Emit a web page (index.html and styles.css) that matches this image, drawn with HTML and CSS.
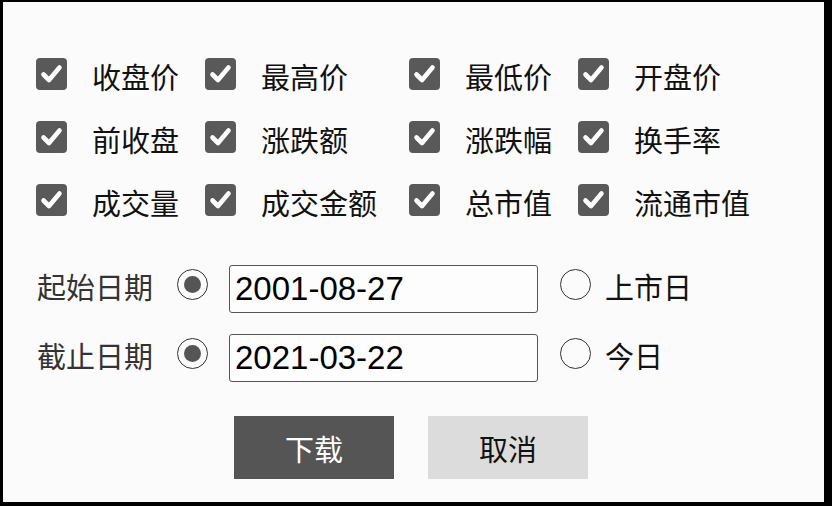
FILE: index.html
```html
<!DOCTYPE html>
<html lang="zh">
<head>
<meta charset="utf-8">
<link rel="stylesheet" href="styles.css">
</head>
<body>
<div class="frame">
  <div class="fields">
    <label class="item"><span class="cb"><svg viewBox="0 0 31 32"><path d="M7.5 16.5 L13 22 L23.5 9.5"/></svg></span><span class="txt">收盘价</span></label>
    <label class="item"><span class="cb"><svg viewBox="0 0 31 32"><path d="M7.5 16.5 L13 22 L23.5 9.5"/></svg></span><span class="txt">最高价</span></label>
    <label class="item"><span class="cb"><svg viewBox="0 0 31 32"><path d="M7.5 16.5 L13 22 L23.5 9.5"/></svg></span><span class="txt">最低价</span></label>
    <label class="item"><span class="cb"><svg viewBox="0 0 31 32"><path d="M7.5 16.5 L13 22 L23.5 9.5"/></svg></span><span class="txt">开盘价</span></label>
    <label class="item"><span class="cb"><svg viewBox="0 0 31 32"><path d="M7.5 16.5 L13 22 L23.5 9.5"/></svg></span><span class="txt">前收盘</span></label>
    <label class="item"><span class="cb"><svg viewBox="0 0 31 32"><path d="M7.5 16.5 L13 22 L23.5 9.5"/></svg></span><span class="txt">涨跌额</span></label>
    <label class="item"><span class="cb"><svg viewBox="0 0 31 32"><path d="M7.5 16.5 L13 22 L23.5 9.5"/></svg></span><span class="txt">涨跌幅</span></label>
    <label class="item"><span class="cb"><svg viewBox="0 0 31 32"><path d="M7.5 16.5 L13 22 L23.5 9.5"/></svg></span><span class="txt">换手率</span></label>
    <label class="item"><span class="cb"><svg viewBox="0 0 31 32"><path d="M7.5 16.5 L13 22 L23.5 9.5"/></svg></span><span class="txt">成交量</span></label>
    <label class="item"><span class="cb"><svg viewBox="0 0 31 32"><path d="M7.5 16.5 L13 22 L23.5 9.5"/></svg></span><span class="txt">成交金额</span></label>
    <label class="item"><span class="cb"><svg viewBox="0 0 31 32"><path d="M7.5 16.5 L13 22 L23.5 9.5"/></svg></span><span class="txt">总市值</span></label>
    <label class="item"><span class="cb"><svg viewBox="0 0 31 32"><path d="M7.5 16.5 L13 22 L23.5 9.5"/></svg></span><span class="txt">流通市值</span></label>
  </div>

  <div class="dates">
    <div class="drow">
      <span class="dlabel">起始日期</span>
      <span class="radio on"></span>
      <div class="input">2001-08-27</div>
      <span class="radio"></span>
      <span class="rtxt">上市日</span>
    </div>
    <div class="drow">
      <span class="dlabel">截止日期</span>
      <span class="radio on"></span>
      <div class="input">2021-03-22</div>
      <span class="radio"></span>
      <span class="rtxt">今日</span>
    </div>
  </div>

  <div class="buttons">
    <div class="btn primary">下载</div>
    <div class="btn secondary">取消</div>
  </div>
</div>
</body>
</html>
```

FILE: styles.css
```css
html, body {
  margin: 0;
  padding: 0;
  background: #000;
}
body {
  width: 832px;
  height: 506px;
  overflow: hidden;
}
.frame {
  box-sizing: border-box;
  width: 832px;
  height: 506px;
  border-style: solid;
  border-color: #000;
  border-width: 2px 8px 4px 3px;
  background: #fbfbfb;
  font-family: "Noto Sans CJK SC", "Liberation Sans", sans-serif;
  color: #111;
  padding-top: 56px;
}
.fields {
  display: grid;
  grid-template-columns: 169px 204px 169px auto;
  grid-auto-rows: 32px;
  row-gap: 31px;
  padding-left: 33px;
}
.item {
  display: flex;
  align-items: center;
  gap: 25px;
}
.cb {
  width: 31px;
  height: 32px;
  border-radius: 4px;
  background: #595959;
  flex: none;
  display: flex;
}
.cb svg {
  width: 31px;
  height: 32px;
}
.cb path {
  fill: none;
  stroke: #fff;
  stroke-width: 4.6;
  stroke-linecap: round;
  stroke-linejoin: round;
}
.txt {
  font-size: 29px;
  line-height: 32px;
  padding-top: 3px;
  white-space: nowrap;
}
.dates {
  margin-top: 49px;
  display: flex;
  flex-direction: column;
  gap: 21px;
}
.drow {
  display: flex;
  align-items: center;
  height: 48px;
  padding-left: 34px;
}
.dlabel {
  font-size: 29px;
  color: #333;
  width: 140px;
  white-space: nowrap;
  margin-top: -6px;
}
.radio {
  box-sizing: border-box;
  width: 31px;
  height: 31px;
  border: 1.6px solid #333;
  border-radius: 50%;
  display: flex;
  align-items: center;
  justify-content: center;
  margin-bottom: 10px;
  flex: none;
}
.radio.on::after {
  content: "";
  width: 17px;
  height: 17px;
  border-radius: 50%;
  background: #555;
}
.input {
  box-sizing: border-box;
  margin-left: 21px;
  width: 309px;
  height: 48px;
  border: 1.5px solid #555;
  border-radius: 3px;
  background: #fdfdfd;
  font-family: "Liberation Sans", Arial, sans-serif;
  font-size: 33px;
  line-height: 45px;
  padding-left: 5px;
  color: #000;
}
.input + .radio {
  margin-left: 22px;
}
.rtxt {
  font-size: 29px;
  margin-left: 14px;
  margin-top: -6px;
}
.buttons {
  margin-top: 34px;
  display: flex;
  gap: 34px;
  padding-left: 231px;
}
.btn {
  width: 160px;
  height: 63px;
  display: flex;
  align-items: center;
  justify-content: center;
  font-size: 29px;
}
.primary {
  background: #555;
  color: #fff;
}
.secondary {
  background: #dcdcdc;
  color: #111;
}
```
